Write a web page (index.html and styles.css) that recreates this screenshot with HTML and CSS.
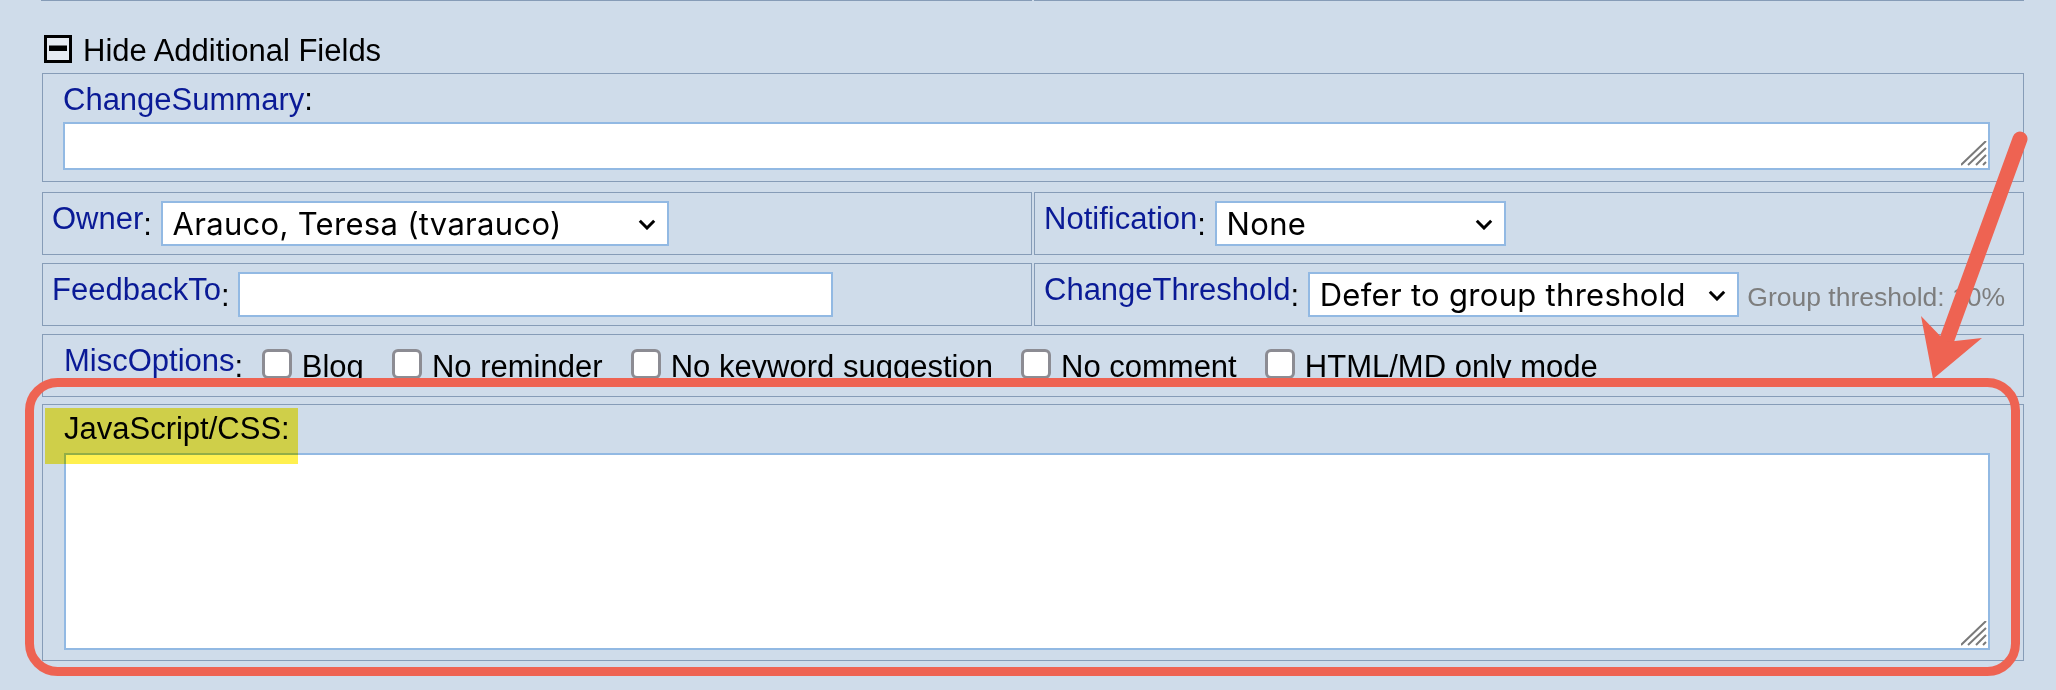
FILE: index.html
```html
<!DOCTYPE html>
<html lang="en">
<head>
    <meta charset="UTF-8">
    <title>Additional Fields</title>
    <link rel="stylesheet" href="styles.css">
</head>
<body>
    <div class="page">
        <div class="form">
            <div class="prev"><div></div><div></div></div>

            <div class="toggle">
                <svg class="toggle-icon" width="28" height="28" viewBox="0 0 28 28">
                    <rect x="1.5" y="1.5" width="25" height="25" fill="#e6ebf2" stroke="#000" stroke-width="3"/>
                    <rect x="5" y="10.5" width="18" height="5.5" fill="#000"/>
                </svg>Hide Additional Fields
            </div>

            <div class="box full summary">
                <div class="caption"><a class="fld">ChangeSummary</a>:</div>
                <div class="ta-wrap">
                    <textarea class="ta ta-short"></textarea>
                    <svg class="grip" width="26" height="25" viewBox="0 0 26 25">
                        <path d="M0 24 L25 0 M7 24 L25 7 M15 24 L25 14 M22 24 L25 21" stroke="#7a7a7a" stroke-width="2"/>
                    </svg>
                </div>
            </div>

            <div class="pair owner-row">
                <div class="box cell">
                    <a class="fld raised">Owner</a>: <span class="sel-wrap"><select class="sel sel-owner"><option>Arauco, Teresa (tvarauco)</option></select><svg class="chev" width="18" height="11" viewBox="0 0 18 11"><path d="M1.8 1.8 L9 9 L16.2 1.8" fill="none" stroke="#000" stroke-width="3"/></svg></span>
                </div>
                <div class="box cell">
                    <a class="fld raised">Notification</a>: <span class="sel-wrap"><select class="sel sel-notify"><option>None</option></select><svg class="chev" width="18" height="11" viewBox="0 0 18 11"><path d="M1.8 1.8 L9 9 L16.2 1.8" fill="none" stroke="#000" stroke-width="3"/></svg></span>
                </div>
            </div>

            <div class="pair feedback-row">
                <div class="box cell">
                    <a class="fld raised">FeedbackTo</a>: <input class="txt txt-feedback" type="text">
                </div>
                <div class="box cell">
                    <a class="fld raised">ChangeThreshold</a>: <span class="sel-wrap"><select class="sel sel-threshold"><option>Defer to group threshold</option></select><svg class="chev" width="18" height="11" viewBox="0 0 18 11"><path d="M1.8 1.8 L9 9 L16.2 1.8" fill="none" stroke="#000" stroke-width="3"/></svg></span> <span class="hint">Group threshold: 10%</span>
                </div>
            </div>

            <div class="box full misc">
                <a class="fld raised">MiscOptions</a>:
                <label class="opt first"><input type="checkbox"><span>Blog</span></label>
                <label class="opt"><input type="checkbox"><span>No reminder</span></label>
                <label class="opt"><input type="checkbox"><span>No keyword suggestion</span></label>
                <label class="opt"><input type="checkbox"><span>No comment</span></label>
                <label class="opt"><input type="checkbox"><span>HTML/MD only mode</span></label>
            </div>

            <div class="box full script">
                <div class="caption">JavaScript/CSS:</div>
                <div class="ta-wrap">
                    <textarea class="ta ta-tall"></textarea>
                    <svg class="grip" width="26" height="25" viewBox="0 0 26 25">
                        <path d="M0 24 L25 0 M7 24 L25 7 M15 24 L25 14 M22 24 L25 21" stroke="#7a7a7a" stroke-width="2"/>
                    </svg>
                </div>
            </div>
        </div>

        <!-- annotation overlay -->
        <div class="hl"></div>
        <svg class="annot" width="2056" height="690" viewBox="0 0 2056 690">
            <rect x="29.5" y="382.5" width="1986" height="289" rx="28" fill="none" stroke="#ee6352" stroke-width="9"/>
            <line x1="2020" y1="139" x2="1946" y2="342" stroke="#ee6352" stroke-width="15" stroke-linecap="round"/>
            <polygon points="1933,379 1921,316 1946,342 1982,338" fill="#ee6352"/>
        </svg>
    </div>
</body>
</html>
```

FILE: styles.css
```css
body {
    margin: 0;
    background: #cfdcea;
    font-family: "Liberation Sans", Arial, sans-serif;
    font-size: 31px;
    color: #000;
}
.page {
    position: relative;
    width: 2056px;
    height: 690px;
    overflow: hidden;
}
.form {
    width: 1982px;
    margin-left: 42px;
}
.prev {
    display: grid;
    grid-template-columns: 1fr 1fr;
    gap: 2px;
    margin-left: -1px;
}
.prev div {
    height: 0;
    border: 1px solid #869cb7;
    border-top: none;
}
.toggle {
    margin: 32px 0 4px 2px;
    line-height: 36px;
    white-space: nowrap;
}
.toggle-icon {
    vertical-align: -2px;
    margin-right: 11px;
}
.box {
    border: 1px solid #869cb7;
}
.full {
    padding: 8px 33px 11px 20px;
}
.caption {
    line-height: 36px;
    white-space: nowrap;
}
.fld {
    color: #0a1a96;
    text-decoration: none;
}
.fld.raised {
    vertical-align: 6px;
    line-height: 1;
}
.ta-wrap {
    position: relative;
}
.ta {
    display: block;
    width: 100%;
    box-sizing: border-box;
    border: 2px solid #92b9e3;
    border-radius: 0;
    background: #fff;
    resize: none;
    outline: none;
    margin: 0;
}
.ta-short {
    height: 48px;
    margin-top: 4px;
}
.grip {
    position: absolute;
    right: 3px;
    bottom: 4px;
}
.pair {
    display: grid;
    grid-template-columns: 1fr 1fr;
    gap: 2px;
}
.owner-row {
    margin-top: 10px;
}
.feedback-row {
    margin-top: 8px;
}
.cell {
    padding: 8px 9px;
    line-height: 36px;
    white-space: nowrap;
}
.sel-wrap {
    position: relative;
    display: inline-block;
}
.sel {
    -webkit-appearance: none;
    appearance: none;
    height: 45px;
    border: 2px solid #92b9e3;
    border-radius: 0;
    background: #fff;
    font-family: Inter, "Liberation Sans", Arial, sans-serif;
    font-size: 31px;
    letter-spacing: 0.3px;
    color: #000;
    padding: 0 40px 0 10px;
    margin: 0;
    outline: none;
}
.sel-owner {
    width: 508px;
}
.sel-notify {
    width: 291px;
}
.sel-threshold {
    width: 431px;
}
.chev {
    position: absolute;
    right: 13px;
    top: 18px;
    pointer-events: none;
}
.txt {
    height: 45px;
    box-sizing: border-box;
    border: 2px solid #92b9e3;
    border-radius: 0;
    background: #fff;
    font-family: Inter, "Liberation Sans", Arial, sans-serif;
    font-size: 31px;
    padding: 0 10px;
    margin: 0;
    outline: none;
}
.txt-feedback {
    width: 595px;
}
.hint {
    color: #7d7d7d;
    font-size: 26.5px;
}
.misc {
    margin-top: 8px;
    padding: 10px 20px 11px 21px;
    line-height: 36px;
    white-space: nowrap;
}
.opt {
    margin-left: 19.5px;
}
.opt.first {
    margin-left: 10px;
}
.opt input {
    -webkit-appearance: none;
    appearance: none;
    width: 30px;
    height: 30px;
    margin: 0 10px 0 0;
    box-sizing: border-box;
    border: 3px solid #8c8c93;
    border-radius: 6px;
    background: #fff;
    vertical-align: -2px;
}
.script {
    margin-top: 7px;
    padding: 6px 33px 10px 21px;
}
.ta-tall {
    height: 197px;
    margin-top: 6px;
}
.hl {
    position: absolute;
    left: 45px;
    top: 408px;
    width: 253px;
    height: 56px;
    background: #fff04f;
    mix-blend-mode: multiply;
}
.annot {
    position: absolute;
    left: 0;
    top: 0;
    pointer-events: none;
}
```
